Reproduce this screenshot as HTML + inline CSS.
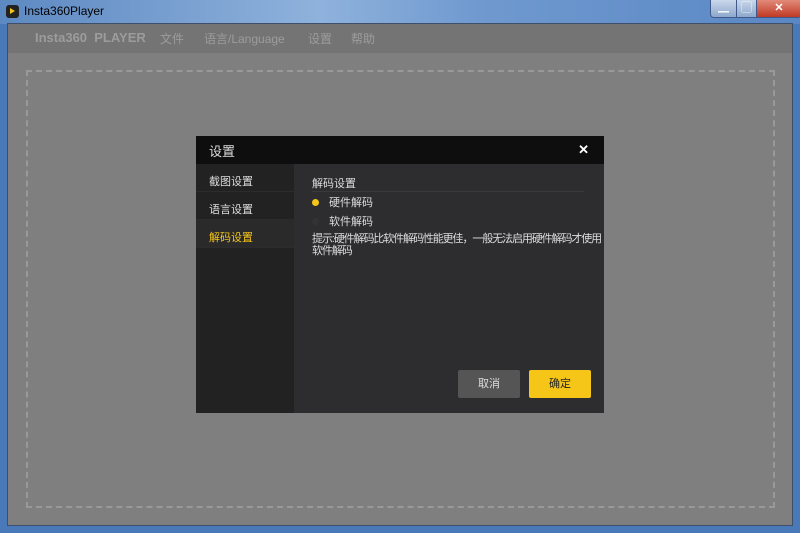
<!DOCTYPE html><html><head><meta charset="utf-8"><style>
*{margin:0;padding:0;box-sizing:border-box}
body{width:800px;height:533px;overflow:hidden;background:#4a79b9;font-family:"Liberation Sans","Noto Sans CJK SC",sans-serif;position:relative}
.tb{position:absolute;left:0;top:0;width:800px;height:24px;background:linear-gradient(90deg,#5d89c2,#8fb2dc 40%,#6f99cf 60%,#5a87c4)}
.ttl{position:absolute;left:24px;top:4px;font-size:12px;color:#000}
.ico{position:absolute;left:6px;top:5px;width:13px;height:13px;background:#222;border-radius:3px}
.ico:after{content:"";position:absolute;left:4px;top:3px;border-left:5px solid #f5c518;border-top:3.5px solid transparent;border-bottom:3.5px solid transparent}
.btns{position:absolute;left:710px;top:0;height:18px;display:flex;border:1px solid #41598a;border-top:none;border-radius:0 0 4px 4px;overflow:hidden}
.btns div{height:17px;background:linear-gradient(#c9d7ea,#8ea8cc);border-right:1px solid #41598a;color:#fff;font-size:11px;text-align:center;line-height:16px}
.client{position:absolute;left:7px;top:23px;width:786px;height:503px;background:#7f7f7f;border:1px solid #3d4f6a}
.menu{position:absolute;left:0;top:0;width:100%;height:29px;background:#747474;color:#9c9c9c;font-size:12px}
.menu span{position:absolute;top:6px}
.dash{position:absolute;left:18px;top:46px;width:749px;height:438px;border:2px dashed #999}
.dlg{position:absolute;left:196px;top:136px;width:408px;height:277px;background:#2d2d2f}
.hd{height:28px;background:#0e0e0e;color:#ddd;font-size:13px;padding:5px 0 0 13px;position:relative}
.x{position:absolute;right:15px;top:6px;color:#fff;font-size:13px;font-weight:bold}
.side{position:absolute;left:0;top:28px;width:98px;height:249px;background:#222}
.side div{height:28px;border-bottom:1px solid #2c2c2c;color:#ddd;font-size:11px;padding:9px 0 0 13px}
.side .a{color:#f5c518;background:#2a2a2a}
.ct{position:absolute;left:116px;top:39px;color:#ddd;font-size:11px}
.line{position:absolute;left:116px;top:55px;width:272px;height:1px;background:#3a3a3a}
.r{position:absolute;left:116px;font-size:11px;color:#ddd}
.dot{display:inline-block;width:7px;height:7px;border-radius:50%;margin-right:10px;vertical-align:0}
.b{position:absolute;top:234px;width:62px;height:28px;font-size:11px;text-align:center;line-height:28px;border-radius:2px}
</style></head><body>
<div class="tb"><div class="ico"></div><div class="ttl">Insta360Player</div>
<div class="btns"><div style="width:26px">▁</div><div style="width:20px">▢</div><div style="width:44px;background:linear-gradient(#e28a7a,#c03a24);border:none;font-weight:bold">✕</div></div></div>
<div class="client">
<div class="menu"><span style="left:27px;font-weight:bold;font-size:13px">Insta360&nbsp; PLAYER</span><span style="left:152px">文件</span><span style="left:196px">语言/Language</span><span style="left:300px">设置</span><span style="left:343px">帮助</span></div>
<div class="dash"></div>
</div>
<div class="dlg">
<div class="hd">设置<span class="x">✕</span></div>
<div class="side"><div>截图设置</div><div>语言设置</div><div class="a">解码设置</div></div>
<div class="ct">解码设置</div><div class="line"></div>
<div class="r" style="top:58px"><span class="dot" style="background:#f5c518"></span>硬件解码</div>
<div class="r" style="top:77px"><span class="dot" style="background:#333"></span>软件解码</div>
<div class="r" style="top:97px;line-height:12px;letter-spacing:-1.1px;white-space:nowrap">提示:硬件解码比软件解码性能更佳，一般无法启用硬件解码才使用<br>软件解码</div>
<div class="b" style="left:262px;background:#555;color:#ddd">取消</div>
<div class="b" style="left:333px;background:#f5c518;color:#222">确定</div>
</div>
</body></html>
